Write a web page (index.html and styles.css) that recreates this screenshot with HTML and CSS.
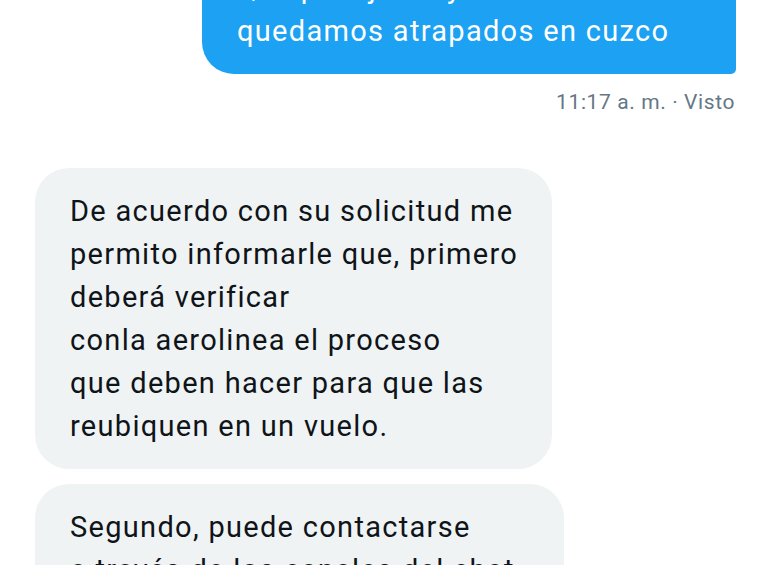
FILE: index.html
```html
<!DOCTYPE html>
<html lang="es">
<head>
  <meta charset="UTF-8">
  <title>Mensajes</title>
  <link rel="stylesheet" href="styles.css">
</head>
<body>
  <div class="conversation">
    <div class="msg-row sent">
      <div class="bubble bubble-sent">
        Que pasajeros y nosotras somos los que<br>
        quedamos atrapados en cuzco
      </div>
    </div>
    <p class="meta">11:17 a. m. · Visto</p>

    <div class="msg-row received">
      <div class="bubble bubble-received">
        De acuerdo con su solicitud me<br>
        permito informarle que, primero<br>
        deberá verificar<br>
        conla aerolinea el proceso<br>
        que deben hacer para que las<br>
        reubiquen en un vuelo.
      </div>
    </div>

    <div class="msg-row received">
      <div class="bubble bubble-received second">
        Segundo, puede contactarse<br>
        a través de los canales del chat.
      </div>
    </div>
  </div>
</body>
</html>
```

FILE: styles.css
```css
body {
  margin: 0;
  background: #ffffff;
  font-family: Roboto, "Noto Sans", sans-serif;
  overflow: hidden;
}

.conversation {
  display: flex;
  flex-direction: column;
  padding: 0 34px 0 35px;
  margin-top: -55px;
}

.msg-row {
  display: flex;
}

.msg-row.sent {
  justify-content: flex-end;
}

.msg-row.received {
  justify-content: flex-start;
}

.bubble {
  font-size: 29px;
  line-height: 43px;
  letter-spacing: 1.3px;
  padding: 22px 34px 21px 35px;
  white-space: nowrap;
}

.bubble-sent {
  background: #1da1f2;
  color: #ffffff;
  border-radius: 32px 32px 5px 32px;
  width: 465px;
  overflow: hidden;
}

.bubble-received {
  background: #eff3f4;
  color: #0f1419;
  border-radius: 34px;
}

.bubble-received.second {
  margin-top: 15px;
  padding-right: 40px;
}

.meta {
  margin: 16px 1px 54px 0;
  text-align: right;
  font-size: 21px;
  line-height: 24px;
  letter-spacing: 0.6px;
  color: #657786;
}
```
